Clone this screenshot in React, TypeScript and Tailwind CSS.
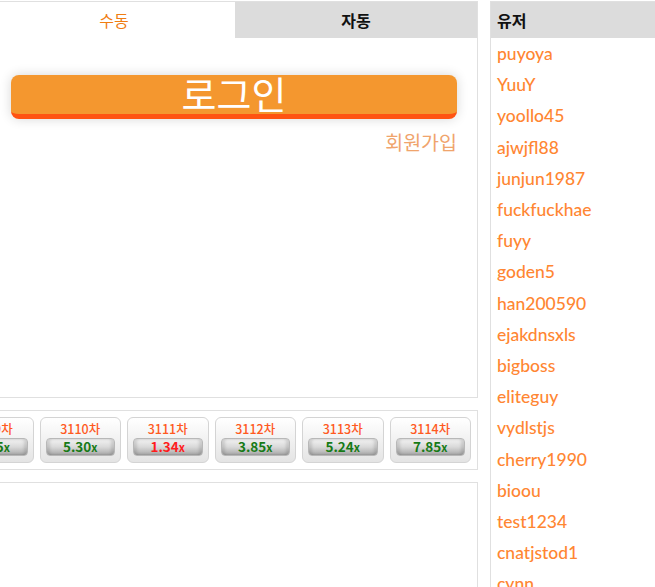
const users = [
  'puyoya',
  'YuuY',
  'yoollo45',
  'ajwjfl88',
  'junjun1987',
  'fuckfuckhae',
  'fuyy',
  'goden5',
  'han200590',
  'ejakdnsxls',
  'bigboss',
  'eliteguy',
  'vydlstjs',
  'cherry1990',
  'bioou',
  'test1234',
  'cnatjstod1',
  'cynn',
  'ohyes77',
]

const rounds = [
  { no: 3109, value: '2.35', hot: false },
  { no: 3110, value: '5.30', hot: false },
  { no: 3111, value: '1.34', hot: true },
  { no: 3112, value: '3.85', hot: false },
  { no: 3113, value: '5.24', hot: false },
  { no: 3114, value: '7.85', hot: false },
]

const kr = { fontFamily: '"Noto Sans CJK KR", "Noto Sans", sans-serif' }

function RoundChip({ no, value, hot }: { no: number; value: string; hot: boolean }) {
  return (
    <div className="w-[81.5px] h-[46px] shrink-0 rounded-[6px] border border-[#d4d4d4] bg-gradient-to-b from-[#ffffff] to-[#e4e4e4] flex flex-col items-center px-[5px] pt-[1px]">
      <div className="text-[12.5px] font-medium leading-[19px] text-[#ff5a1f]">{no}차</div>
      <div className="w-full h-[18px] rounded-[4px] border border-[#b8b8b8] bg-gradient-to-b from-[#f4f4f4] via-[#d9d9d9] to-[#a9a9a9] shadow-[inset_3px_0_3px_rgba(0,0,0,0.12),inset_-3px_0_3px_rgba(0,0,0,0.12)] flex items-center justify-center">
        <span
          className={`font-bold text-[13.5px] leading-none ${hot ? 'text-[#ff1c1c]' : 'text-[#167a16]'}`}
        >
          {value}
          <span className="text-[11px]">x</span>
        </span>
      </div>
    </div>
  )
}

export default function App() {
  return (
    <div className="w-[655px] h-[587px] overflow-hidden bg-white flex items-start pt-[1px]" style={kr}>
      {/* left column, its left edge runs off the screen */}
      <div className="ml-[-8px] w-[486px] shrink-0 flex flex-col gap-[12px]">
        <div className="h-[397px] border border-[#e0e0e0] flex flex-col">
          <div className="flex h-[36px]">
            <div className="flex-1 flex items-center justify-center text-[16px] text-[#f07d12] bg-white">
              수동
            </div>
            <div className="flex-1 flex items-center justify-center text-[16px] font-bold text-[#111] bg-[#dcdcdc]">
              자동
            </div>
          </div>
          <div className="pl-[18px] pr-[20px] pt-[37px] flex flex-col">
            <button className="h-[44px] w-full rounded-[8px] bg-[#f4972f] border-b-[5px] border-[#ff5312] shadow-[0_0_12px_rgba(0,0,0,0.16)] text-white text-[38px] leading-[36px] flex items-start justify-center">
              로그인
            </button>
            <div className="self-end mt-[11px] text-[19.5px] leading-[24px] text-[#f0a46c]">
              회원가입
            </div>
          </div>
        </div>

        <div className="h-[60px] border border-[#e0e0e0] flex justify-end gap-[6px] overflow-hidden pt-[6px] pr-[6px]">
          {rounds.map((r) => (
            <RoundChip key={r.no} {...r} />
          ))}
        </div>

        <div className="h-[200px] border border-[#e0e0e0]" />
      </div>

      {/* right column: user list */}
      <div className="ml-[12px] w-[200px] shrink-0 border-l border-t border-[#e0e0e0] h-[620px]">
        <div className="h-[36px] bg-[#dcdcdc] flex items-center px-[6px] text-[16px] font-bold text-[#111]">
          유저
        </div>
        <ul className="px-[6px]" style={{ fontFamily: 'Lato, "Noto Sans", sans-serif' }}>
          {users.map((u) => (
            <li key={u} className="text-[17.5px] font-medium leading-[31.2px] text-[#ff8632]">
              {u}
            </li>
          ))}
        </ul>
      </div>
    </div>
  )
}
